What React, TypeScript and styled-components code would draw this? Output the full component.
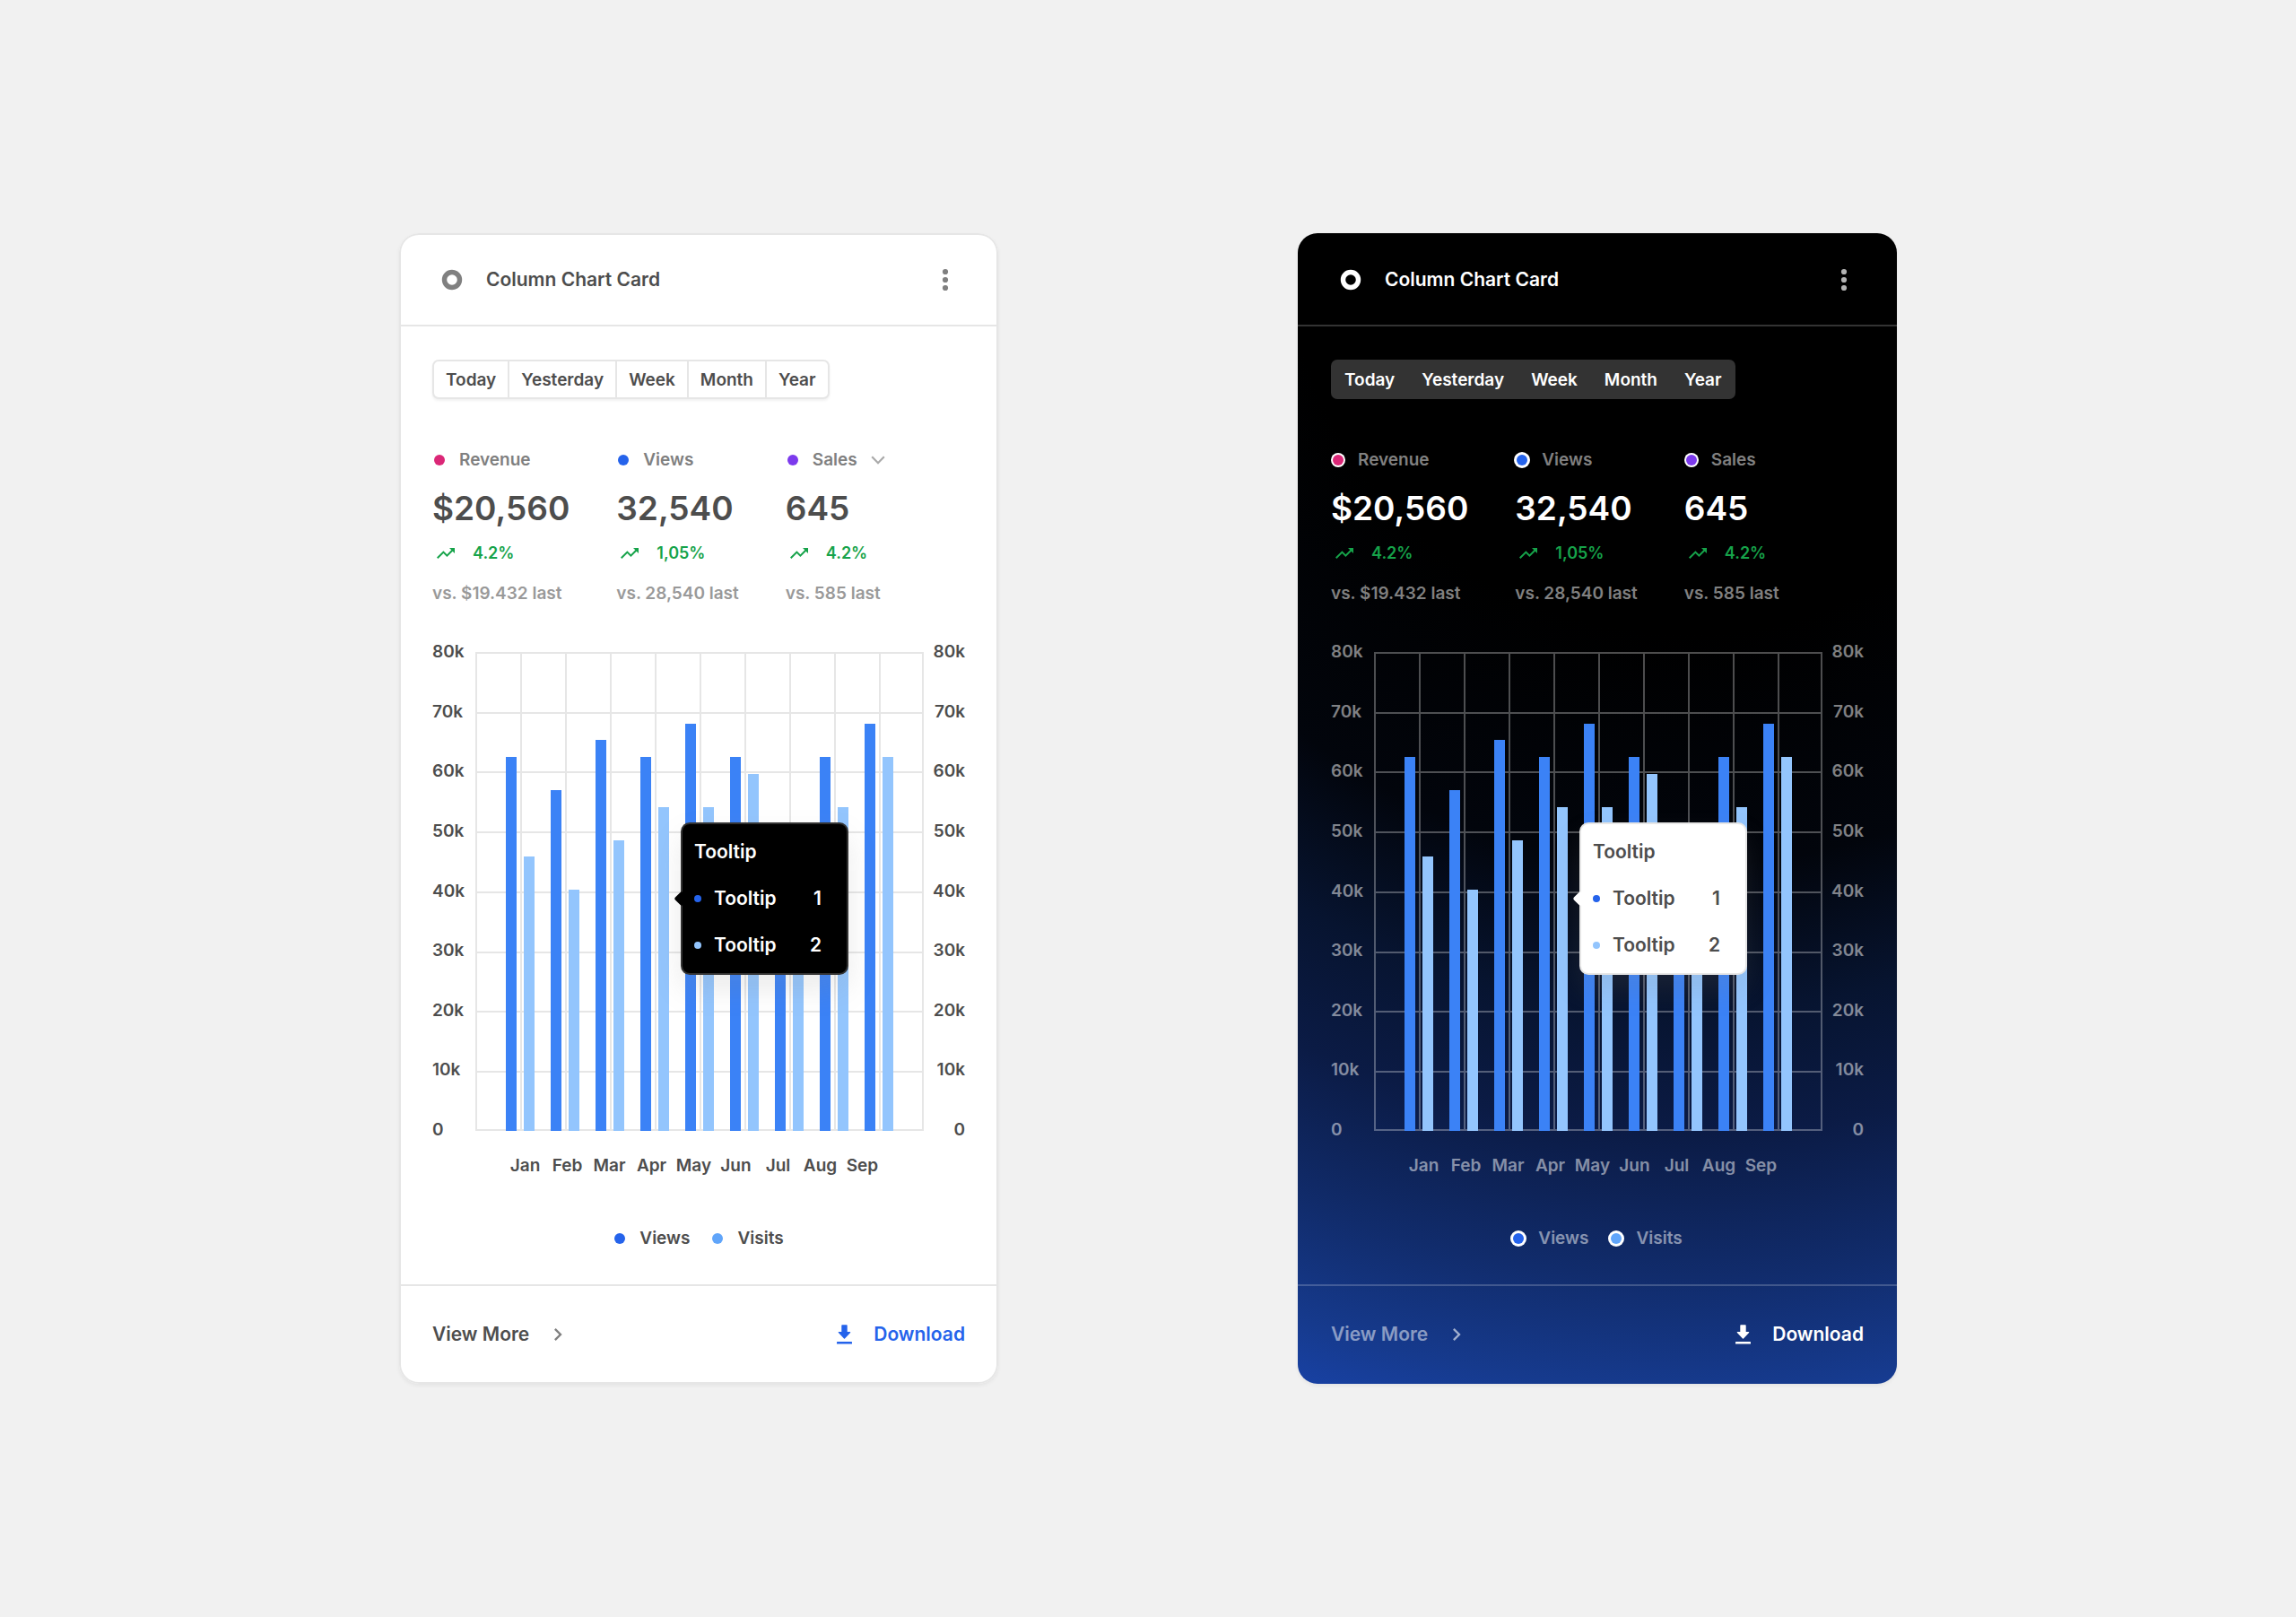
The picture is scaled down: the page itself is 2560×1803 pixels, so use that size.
import React from "react";
import styled, { createGlobalStyle, ThemeProvider } from "styled-components";

interface CardTheme {
  surface: string;
  outline: string;
  divider: string;
  title: string;
  ring: string;
  menu: string;
  segment: string;
  segmentOutline: string;
  segmentLine: number;
  segmentPadding: number;
  segmentText: string;
  segmentShadow: string;
  label: string;
  value: string;
  note: string;
  axis: string;
  gridLine: string;
  legend: string;
  dotRing: string;
  tooltip: string;
  tooltipOutline: string;
  tooltipText: string;
  more: string;
  chevron: string;
  download: string;
}

const light: CardTheme = {
  surface: "#ffffff",
  outline: "#e6e6e6",
  divider: "#e6e6e6",
  title: "#4d4d4d",
  ring: "#808080",
  menu: "#808080",
  segment: "#ffffff",
  segmentOutline: "#e6e6e6",
  segmentLine: 2,
  segmentPadding: 13,
  segmentText: "#4d4d4d",
  segmentShadow: "0 2px 3px rgba(0, 0, 0, 0.06)",
  label: "#808080",
  value: "#4d4d4d",
  note: "#999999",
  axis: "#4d4d4d",
  gridLine: "#e6e6e6",
  legend: "#4d4d4d",
  dotRing: "transparent",
  tooltip: "#000000",
  tooltipOutline: "#333333",
  tooltipText: "#ffffff",
  more: "#4d4d4d",
  chevron: "#808080",
  download: "#2563eb",
};

const dark: CardTheme = {
  surface:
    "radial-gradient(circle 1354px at 65% 0, #000000 33%, #02050c 52%, #071430 64%, #0b1b45 74%, #112c6c 86%, #163a8d 95%, #1841a3 100%)",
  outline: "transparent",
  divider: "rgba(255, 255, 255, 0.2)",
  title: "#ffffff",
  ring: "#ffffff",
  menu: "#b3b3b3",
  segment: "#333333",
  segmentOutline: "transparent",
  segmentLine: 0,
  segmentPadding: 15,
  segmentText: "#ffffff",
  segmentShadow: "none",
  label: "#808080",
  value: "#ffffff",
  note: "#808080",
  axis: "rgba(255, 255, 255, 0.5)",
  gridLine: "rgba(255, 255, 255, 0.3)",
  legend: "rgba(255, 255, 255, 0.5)",
  dotRing: "#ffffff",
  tooltip: "#ffffff",
  tooltipOutline: "#e6e6e6",
  tooltipText: "#4d4d4d",
  more: "rgba(255, 255, 255, 0.5)",
  chevron: "rgba(255, 255, 255, 0.6)",
  download: "#ffffff",
};

const GlobalStyle = createGlobalStyle`
  *, *::before, *::after { box-sizing: border-box; }
  body {
    margin: 0;
    background: #f1f1f1;
    font-family: Inter, "Liberation Sans", sans-serif;
    font-size: 19px;
    line-height: 24px;
    font-weight: 600;
  }
  h2, h3, p, dl, dt, dd, ul, figure { margin: 0; padding: 0; font: inherit; }
  ul { list-style: none; }
  button { margin: 0; padding: 0; border: 0; background: none; color: inherit; font: inherit; cursor: pointer; }
  svg { display: block; flex: none; }
`;

const Page = styled.main`
  min-height: 100vh;
  padding: 40px;
  display: flex;
  flex-wrap: wrap;
  align-items: center;
  justify-content: center;
  gap: 334px;
`;

const Card = styled.section`
  width: 100%;
  max-width: 668px;
  display: flex;
  flex-direction: column;
  border-radius: 22px;
  background: ${(p) => p.theme.surface};
  box-shadow: inset 0 0 0 2px ${(p) => p.theme.outline}, 0 2px 4px rgba(0, 0, 0, 0.06);
`;

const Header = styled.header`
  display: flex;
  align-items: center;
  gap: 16px;
  height: 104px;
  padding: 2px 37px 0;
  border-bottom: 2px solid ${(p) => p.theme.divider};
`;

const IconSlot = styled.span<{ $color: string }>`
  width: 44px;
  height: 44px;
  display: flex;
  align-items: center;
  justify-content: center;
  color: ${(p) => p.$color};
`;

const Title = styled.h2`
  flex: 1;
  font-size: 21px;
  color: ${(p) => p.theme.title};
`;

const MenuButton = styled.button`
  color: ${(p) => p.theme.menu};
`;

const Body = styled.div`
  display: flex;
  flex-direction: column;
  align-items: stretch;
  gap: 52px;
  padding: 37px 37px 39px;
`;

const Segments = styled.div`
  align-self: flex-start;
  display: flex;
  height: 44px;
  border: ${(p) => p.theme.segmentLine}px solid ${(p) => p.theme.segmentOutline};
  border-radius: 7px;
  background: ${(p) => p.theme.segment};
  box-shadow: ${(p) => p.theme.segmentShadow};
`;

const Segment = styled.button`
  padding: 2px ${(p) => p.theme.segmentPadding}px 0;
  color: ${(p) => p.theme.segmentText};

  &:not(:first-child) {
    border-left: ${(p) => p.theme.segmentLine}px solid ${(p) => p.theme.segmentOutline};
  }
`;

const Stats = styled.dl`
  display: flex;
  gap: 52px;
`;

const Stat = styled.div`
  display: flex;
  flex-direction: column;
  gap: 20px;
`;

const StatLabel = styled.dt`
  display: flex;
  align-items: center;
  height: 32px;
  gap: 15px;
  padding-left: 1px;
  color: ${(p) => p.theme.label};
`;

const Dot = styled.span<{ $color: string; $ring?: number }>`
  width: 12px;
  height: 12px;
  margin: 0 1px;
  border-radius: 50%;
  background: ${(p) => p.$color};
  box-shadow: 0 0 0 ${(p) => p.$ring ?? 3}px ${(p) => p.theme.dotRing};
`;

const ExpandButton = styled.button`
  color: #aaaaaa;
`;

const Value = styled.dd`
  font-size: 37px;
  line-height: 36px;
  color: ${(p) => p.theme.value};
`;

const Trend = styled.dd`
  display: flex;
  align-items: center;
  gap: 18px;
  padding-left: 3px;
  font-size: 18px;
  color: #16a34a;
`;

const Note = styled.dd`
  line-height: 26px;
  white-space: nowrap;
  color: ${(p) => p.theme.note};
`;

const Chart = styled.figure`
  display: grid;
  grid-template-columns: 48px minmax(0, 1fr) 46px;
  row-gap: 27px;
  color: ${(p) => p.theme.axis};
`;

const Axis = styled.ul<{ $end?: boolean }>`
  display: flex;
  flex-direction: column;
  justify-content: space-between;
  align-items: ${(p) => (p.$end ? "flex-end" : "flex-start")};
  margin: 0 0 1px;
`;

const Tick = styled.li`
  height: 0;
  display: flex;
  align-items: center;
`;

const Plot = styled.div`
  position: relative;
  height: 534px;
`;

const PlotSvg = styled.svg`
  width: 100%;
  height: 100%;
`;

const GridPath = styled.path`
  fill: none;
  stroke: ${(p) => p.theme.gridLine};
  stroke-width: 2px;
`;

const Months = styled.ul`
  grid-column: 1 / -1;
  display: grid;
  grid-template-columns: repeat(9, 47px);
  padding-left: 80px;
  text-align: center;
`;

const Legend = styled.ul`
  display: flex;
  justify-content: center;
  gap: 24px;
  padding-top: 5px;
  color: ${(p) => p.theme.legend};
`;

const LegendItem = styled.li`
  display: flex;
  align-items: center;
  gap: 15px;
`;

const Tooltip = styled.div`
  position: absolute;
  left: 229px;
  top: 190px;
  width: 187px;
  padding: 5px 28px 5px 13px;
  border: 2px solid ${(p) => p.theme.tooltipOutline};
  border-radius: 10px;
  background: ${(p) => p.theme.tooltip};
  color: ${(p) => p.theme.tooltipText};
  font-size: 21px;
  line-height: 52px;
  box-shadow: 0 16px 32px rgba(128, 128, 128, 0.16);

  &::before {
    content: "";
    position: absolute;
    left: -7px;
    top: 77px;
    width: 12px;
    height: 12px;
    border-radius: 2px;
    transform: rotate(45deg);
    background: ${(p) => p.theme.tooltip};
  }
`;

const TooltipRow = styled.p`
  position: relative;
  display: flex;
  align-items: center;
  gap: 14px;
`;

const TooltipDot = styled.span<{ $color: string }>`
  width: 8px;
  height: 8px;
  border-radius: 50%;
  background: ${(p) => p.$color};
`;

const TooltipValue = styled.span`
  margin-left: auto;
`;

const Footer = styled.footer`
  display: flex;
  align-items: center;
  justify-content: space-between;
  height: 111px;
  padding: 0 37px 2px;
  border-top: 2px solid ${(p) => p.theme.divider};
  font-size: 21px;
`;

const MoreLink = styled.a`
  display: flex;
  align-items: center;
  gap: 18px;
  color: ${(p) => p.theme.more};
  text-decoration: none;

  svg {
    color: ${(p) => p.theme.chevron};
  }
`;

const DownloadButton = styled.button`
  display: flex;
  align-items: center;
  gap: 24px;
  color: ${(p) => p.theme.download};
`;

const RingIcon = () => (
  <svg width="24" height="24" viewBox="0 0 24 24" aria-hidden="true">
    <circle cx="12" cy="12" r="8.5" fill="none" stroke="currentColor" strokeWidth="5.4" />
  </svg>
);

const DotsIcon = () => (
  <svg width="8" height="26" viewBox="0 0 8 26" fill="currentColor" aria-hidden="true">
    <circle cx="4" cy="4" r="3.1" />
    <circle cx="4" cy="13" r="3.1" />
    <circle cx="4" cy="22" r="3.1" />
  </svg>
);

const TrendIcon = () => (
  <svg width="24" height="24" viewBox="0 0 24 24" fill="currentColor" aria-hidden="true">
    <path d="M16 6l2.29 2.29-4.88 4.88-4-4L2 16.59 3.41 18l6-6 4 4 6.3-6.29L22 12V6z" />
  </svg>
);

const ChevronDown = () => (
  <svg width="16" height="10" viewBox="0 0 16 10" aria-hidden="true">
    <path d="M1.2 1.2 8 8.2l6.8-7" fill="none" stroke="currentColor" strokeWidth="2.2" />
  </svg>
);

const ChevronRight = () => (
  <svg width="28" height="28" viewBox="0 0 24 24" fill="currentColor" aria-hidden="true">
    <path d="M10 6 8.59 7.41 13.17 12l-4.58 4.59L10 18l6-6z" />
  </svg>
);

const DownloadIcon = () => (
  <svg width="17" height="22" viewBox="0 0 17 22" fill="currentColor" aria-hidden="true">
    <path
      d="M6 1h5v7.6h3.6L8.5 15 2.4 8.6H6z"
      stroke="currentColor"
      strokeWidth="1.4"
      strokeLinejoin="round"
    />
    <rect x="0" y="19" width="17" height="2.6" rx="0.6" />
  </svg>
);

const PERIODS = ["Today", "Yesterday", "Week", "Month", "Year"];
const TICKS = ["80k", "70k", "60k", "50k", "40k", "30k", "20k", "10k", "0"];
const MONTHS = ["Jan", "Feb", "Mar", "Apr", "May", "Jun", "Jul", "Aug", "Sep"];

const STATS = [
  { label: "Revenue", color: "#db2777", ring: 2, value: "$20,560", change: "4.2%", note: "vs. $19.432 last" },
  { label: "Views", color: "#2563eb", ring: 3, value: "32,540", change: "1,05%", note: "vs. 28,540 last" },
  { label: "Sales", color: "#7c3aed", ring: 2, value: "645", change: "4.2%", note: "vs. 585 last" },
];

const VIEWS = [417, 380, 436, 417, 454, 417, 300, 417, 454];
const VISITS = [306, 269, 324, 361, 361, 398, 240, 361, 417];

const PLOT_WIDTH = 500;
const PLOT_HEIGHT = 534;

const gridPath = [
  ...Array.from({ length: 10 }, (_, i) => `M${i * 50 + 1} 0V${PLOT_HEIGHT}`),
  `M${PLOT_WIDTH - 1} 0V${PLOT_HEIGHT}`,
  ...Array.from({ length: 8 }, (_, i) => `M0 ${Math.round(i * 66.7) + 1}H${PLOT_WIDTH}`),
  `M0 ${PLOT_HEIGHT - 1}H${PLOT_WIDTH}`,
].join("");

function ColumnChart() {
  return (
    <Chart>
      <Axis>
        {TICKS.map((t) => (
          <Tick key={t}>{t}</Tick>
        ))}
      </Axis>
      <Plot>
        <PlotSvg
          viewBox={`0 0 ${PLOT_WIDTH} ${PLOT_HEIGHT}`}
          preserveAspectRatio="none"
          role="img"
          aria-label="Views and visits by month"
        >
          <GridPath d={gridPath} />
          {VIEWS.map((h, i) => (
            <rect key={`a${i}`} x={34 + i * 50} y={PLOT_HEIGHT - h} width="12" height={h} fill="#3b82f6" />
          ))}
          {VISITS.map((h, i) => (
            <rect key={`b${i}`} x={54 + i * 50} y={PLOT_HEIGHT - h} width="12" height={h} fill="#93c5fd" />
          ))}
        </PlotSvg>
        <Tooltip role="tooltip">
          <TooltipRow>Tooltip</TooltipRow>
          <TooltipRow>
            <TooltipDot $color="#2563eb" />
            Tooltip
            <TooltipValue>1</TooltipValue>
          </TooltipRow>
          <TooltipRow>
            <TooltipDot $color="#93c5fd" />
            Tooltip
            <TooltipValue>2</TooltipValue>
          </TooltipRow>
        </Tooltip>
      </Plot>
      <Axis $end>
        {TICKS.map((t) => (
          <Tick key={t}>{t}</Tick>
        ))}
      </Axis>
      <Months>
        {MONTHS.map((m) => (
          <li key={m}>{m}</li>
        ))}
      </Months>
    </Chart>
  );
}

function ChartCard({ theme, expandable }: { theme: CardTheme; expandable?: boolean }) {
  return (
    <ThemeProvider theme={theme}>
      <Card>
        <Header>
          <IconSlot $color={theme.ring}>
            <RingIcon />
          </IconSlot>
          <Title>Column Chart Card</Title>
          <MenuButton type="button" aria-label="Card menu">
            <IconSlot $color={theme.menu}>
              <DotsIcon />
            </IconSlot>
          </MenuButton>
        </Header>
        <Body>
          <Segments role="group" aria-label="Period">
            {PERIODS.map((p) => (
              <Segment key={p} type="button">
                {p}
              </Segment>
            ))}
          </Segments>
          <Stats>
            {STATS.map((s) => (
              <Stat key={s.label}>
                <StatLabel>
                  <Dot $color={s.color} $ring={s.ring} />
                  {s.label}
                  {expandable && s.label === "Sales" && (
                    <ExpandButton type="button" aria-label="More metrics">
                      <ChevronDown />
                    </ExpandButton>
                  )}
                </StatLabel>
                <Value>{s.value}</Value>
                <Trend>
                  <TrendIcon />
                  {s.change}
                </Trend>
                <Note>{s.note}</Note>
              </Stat>
            ))}
          </Stats>
          <ColumnChart />
          <Legend>
            <LegendItem>
              <Dot $color="#2563eb" />
              Views
            </LegendItem>
            <LegendItem>
              <Dot $color="#60a5fa" />
              Visits
            </LegendItem>
          </Legend>
        </Body>
        <Footer>
          <MoreLink href="#more">
            View More
            <ChevronRight />
          </MoreLink>
          <DownloadButton type="button">
            <DownloadIcon />
            Download
          </DownloadButton>
        </Footer>
      </Card>
    </ThemeProvider>
  );
}

export default function App() {
  return (
    <>
      <GlobalStyle />
      <Page>
        <ChartCard theme={light} expandable />
        <ChartCard theme={dark} />
      </Page>
    </>
  );
}
